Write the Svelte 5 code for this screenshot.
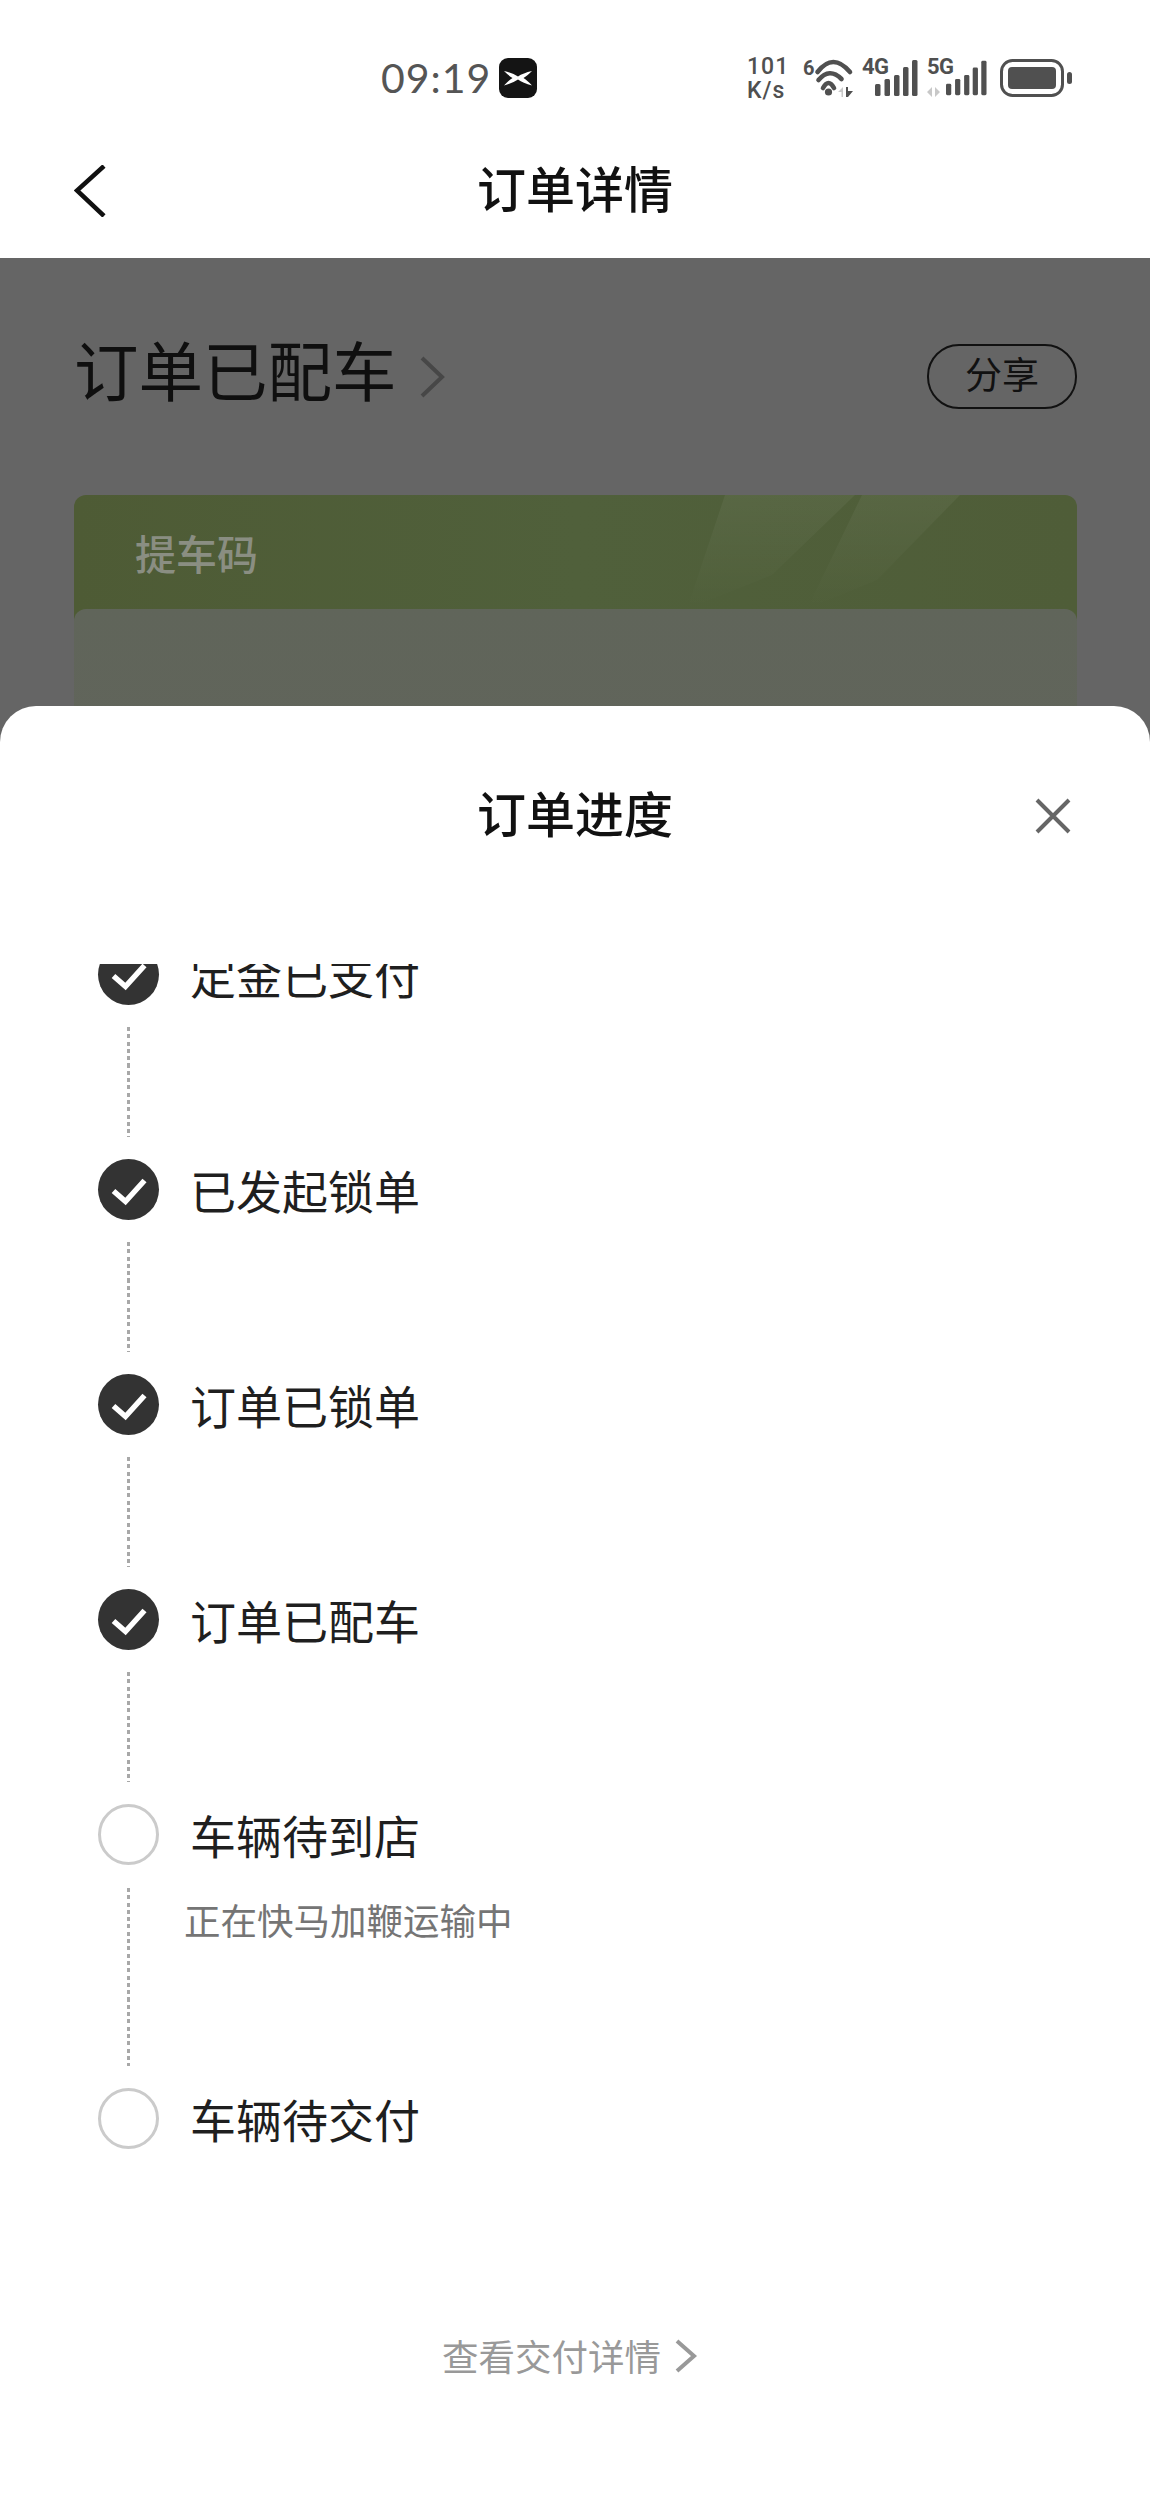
<script lang="ts">
  const steps = [
    { label: '定金已支付', done: true },
    { label: '已发起锁单', done: true },
    { label: '订单已锁单', done: true },
    { label: '订单已配车', done: true },
    { label: '车辆待到店', done: false, note: '正在快马加鞭运输中' },
    { label: '车辆待交付', done: false },
  ]

  const bars = [
    [0, 12],
    [9.5, 17],
    [19, 21],
    [28, 29],
    [37, 36],
  ]
</script>

<div class="phone">
  <div class="status">
    <span class="time">09:19</span>
    <span class="app-badge">
      <svg width="38" height="40" viewBox="0 0 38 40">
        <rect width="38" height="40" rx="9" fill="#141414" />
        <path d="M5 13 Q14 15 19 18.500 Q24 15 33 13 Q28 18 24.500 20 Q28 22 33 27.500 Q24 25 19 21.500 Q14 25 5 27.500 Q10 22 13.500 20 Q10 18 5 13Z" fill="#fff" />
      </svg>
    </span>
    <div class="indicators">
      <div class="speed"><span>101</span><span>K/s</span></div>
      <div class="wifi">
        <span class="wifi-num">6</span>
        <svg width="38" height="38" viewBox="0 0 38 38">
          <g fill="none" stroke="#505050" stroke-width="4.600" stroke-linecap="round">
            <path d="M2.500 13 Q18 -7 35 13" />
            <path d="M3.500 21 Q14.500 8 26.500 20" />
            <path d="M8 29 Q13.500 19 19 29" />
          </g>
          <circle cx="13.500" cy="33" r="3.600" fill="#505050" />
          <path d="M23 33 L28 28 V38 H26.500 V33Z" fill="#c8c8c8" />
          <path d="M31 28 H33 V32 H38 L33 38 H31Z" fill="#505050" />
        </svg>
      </div>
      <div class="signal">
        <span class="net">4G</span>
        <svg width="43" height="37" viewBox="0 0 43 37">
          {#each bars as [x, h]}
            <rect x={x} y={37 - h} width="5.500" height={h} rx="1.500" fill="#505050" />
          {/each}
        </svg>
      </div>
      <div class="signal second">
        <span class="net">5G</span>
        <svg class="arrows" width="14" height="10" viewBox="0 0 14 10">
          <path d="M0 5 L5 0 V10 Z M8 0 L13 5 L8 10 Z" fill="#c8c8c8" />
        </svg>
        <svg width="41" height="37" viewBox="0 0 43 37">
          {#each bars as [x, h]}
            <rect x={x} y={37 - h} width="5.500" height={h} rx="1.500" fill="#505050" />
          {/each}
        </svg>
      </div>
      <svg width="72" height="38" viewBox="0 0 72 38">
        <rect x="1.500" y="1.500" width="61" height="35" rx="11" fill="none" stroke="#505050" stroke-width="3" />
        <rect x="8" y="8" width="48" height="22" rx="4" fill="#505050" />
        <rect x="67" y="13" width="5" height="12" rx="2.500" fill="#505050" />
      </svg>
    </div>
  </div>

  <header class="nav">
    <svg class="back" width="32" height="52" viewBox="0 0 32 52">
      <path d="M30 1 L3 25.500 L30 51" fill="none" stroke="#111" stroke-width="4.500" />
    </svg>
    <h1>订单详情</h1>
  </header>

  <main class="dimmed">
    <div class="headline">
      <div class="order-state">
        <span>订单已配车</span>
        <svg width="28" height="44" viewBox="0 0 28 44">
          <path d="M4 3 L24 22 L4 41" fill="none" stroke="#474747" stroke-width="4" />
        </svg>
      </div>
      <button class="share">分享</button>
    </div>
    <section class="code-card">
      <svg class="sheen" width="500" height="114" viewBox="0 0 500 114">
        <defs>
          <linearGradient id="fade" x1="0" y1="0" x2="0" y2="1">
            <stop offset="0" stop-color="#fff" stop-opacity="0.05" />
            <stop offset="1" stop-color="#fff" stop-opacity="0" />
          </linearGradient>
        </defs>
        <polygon points="148,0 278,0 195,80 110,114" fill="url(#fade)" />
        <polygon points="285,0 383,0 300,85 230,114" fill="url(#fade)" />
      </svg>
      <h2>提车码</h2>
      <div class="code-body"></div>
    </section>
  </main>

  <div class="sheet">
    <div class="sheet-head">
      <span></span>
      <h1>订单进度</h1>
      <svg class="close" width="38" height="38" viewBox="0 0 38 38">
        <path d="M3 3 L35 35 M35 3 L3 35" stroke="#666" stroke-width="4" fill="none" />
      </svg>
    </div>

    <div class="timeline">
      <ol>
        {#each steps as step, i}
          <li class="step">
            <span class="dot" class:done={step.done}>
              {#if step.done}
                <svg width="61" height="61" viewBox="0 0 61 61">
                  <path d="M15.500 32 L27.500 42.500 L46.500 21.500" fill="none" stroke="#fff" stroke-width="5.500" />
                </svg>
              {/if}
            </span>
            <span class="label">{step.label}</span>
          </li>
          {#if i < steps.length - 1}
            <li class="link" class:tall={step.note}>
              <span class="dash"></span>
              {#if step.note}<span class="note">{step.note}</span>{/if}
            </li>
          {/if}
        {/each}
      </ol>

      <div class="details">
        <span>查看交付详情</span>
        <svg width="24" height="34" viewBox="0 0 24 34">
          <path d="M3 2 L20 17 L3 32" fill="none" stroke="#999" stroke-width="4" />
        </svg>
      </div>
    </div>
  </div>
</div>

<style>
  :global(body) {
    margin: 0;
    background: #fff;
  }

  .phone {
    position: relative;
    width: 1150px;
    height: 2496px;
    overflow: hidden;
    display: flex;
    flex-direction: column;
    background: #fff;
    font-family: "Noto Sans CJK SC", "Noto Sans", sans-serif;
    color: #1c1c1c;
  }

  .status {
    height: 130px;
    box-sizing: border-box;
    padding: 58px 78px 0 381px;
    display: flex;
    align-items: flex-start;
    flex-shrink: 0;
  }

  .time {
    font-family: Lato, "Noto Sans", sans-serif;
    font-size: 41px;
    line-height: 40px;
    letter-spacing: 1px;
    color: #555;
    margin-right: 8px;
  }

  .app-badge {
    height: 40px;
  }

  .app-badge svg {
    display: block;
  }

  .indicators {
    margin-left: auto;
    display: flex;
    align-items: flex-start;
    color: #505050;
    font-family: Roboto, "Liberation Sans", sans-serif;
    font-weight: 700;
  }

  .speed {
    display: flex;
    flex-direction: column;
    width: 56px;
    margin-top: -3px;
    font-size: 23px;
    line-height: 24px;
    font-weight: 500;
    letter-spacing: 1px;
  }

  .wifi {
    display: flex;
    width: 59px;
    position: relative;
  }

  .wifi svg {
    margin-left: 1px;
    margin-top: 1px;
    overflow: visible;
  }

  .wifi-num {
    font-size: 20px;
    line-height: 20px;
    width: 11px;
  }

  .signal {
    display: flex;
    width: 65px;
    position: relative;
    margin-top: 1px;
  }

  .signal svg:last-child {
    position: absolute;
    left: 13px;
    top: 0;
  }

  .net {
    font-size: 22px;
    line-height: 20px;
    letter-spacing: -0.5px;
    margin-top: -2px;
  }

  .second {
    width: 73px;
  }

  .second .arrows {
    position: absolute;
    left: 0;
    top: 28px;
  }

  .second svg:last-child {
    left: 19px;
  }

  .indicators > svg {
    margin-top: 1px;
  }

  .nav {
    height: 128px;
    padding-bottom: 14px;
    box-sizing: border-box;
    display: flex;
    align-items: center;
    justify-content: center;
    position: relative;
    flex-shrink: 0;
  }

  .nav h1,
  .sheet-head h1 {
    margin: 0;
    font-size: 49px;
    line-height: 60px;
    font-weight: 500;
    color: #111;
  }

  .back {
    position: absolute;
    left: 74px;
    top: 35px;
  }

  .dimmed {
    flex: 1;
    background: #656565;
    padding: 87px 73px 0 74px;
  }

  .headline {
    display: flex;
    align-items: center;
    justify-content: space-between;
    height: 63px;
  }

  .order-state {
    display: flex;
    align-items: center;
    gap: 21px;
    font-size: 64.500px;
    line-height: 70px;
    color: #0f0f0f;
    margin-top: -18px;
  }

  .order-state svg {
    margin-top: 18px;
  }

  .share {
    width: 150px;
    height: 65px;
    border: 2px solid #111;
    border-radius: 32px;
    background: none;
    font: inherit;
    font-size: 37px;
    line-height: 50px;
    padding: 0 0 8px;
    color: #111;
  }

  .code-card {
    position: relative;
    margin-top: 87px;
    height: 400px;
    border-radius: 12px;
    background: linear-gradient(to right, #4e5b35, #50603b 50%, #4f5d38);
    overflow: hidden;
  }

  .sheen {
    position: absolute;
    top: 0;
    right: 0;
  }

  .code-card h2 {
    position: relative;
    margin: 0;
    padding: 32px 0 0 61px;
    height: 82px;
    font-size: 41px;
    line-height: 50px;
    font-weight: 500;
    color: #8a8e82;
  }

  .code-body {
    height: 300px;
    border-radius: 12px;
    background: linear-gradient(to bottom, #60655a, #62645c);
    position: relative;
  }

  .sheet {
    position: absolute;
    left: 0;
    right: 0;
    top: 706px;
    bottom: 0;
    background: #fff;
    border-radius: 36px 36px 0 0;
    padding-top: 76px;
    display: flex;
    flex-direction: column;
  }

  .sheet-head {
    display: grid;
    grid-template-columns: 1fr auto 1fr;
    align-items: center;
    padding-right: 78px;
    padding-left: 78px;
  }

  .close {
    justify-self: end;
    margin-top: 8px;
  }

  .timeline {
    margin-top: 122px;
    flex: 1;
    overflow: hidden;
  }

  ol {
    list-style: none;
    margin: -20px 0 0;
    padding: 0 0 0 98px;
  }

  .step {
    display: flex;
    align-items: center;
    height: 61px;
    gap: 31px;
  }

  .dot {
    box-sizing: border-box;
    width: 61px;
    height: 61px;
    border-radius: 50%;
    border: 3px solid #cbcbcb;
    flex-shrink: 0;
    position: relative;
  }

  .dot.done {
    border: none;
    background: #333;
  }

  .dot svg {
    display: block;
  }

  .label {
    font-size: 46px;
    line-height: 61px;
    color: #1f1f1f;
  }

  .link {
    display: flex;
    height: 110px;
    padding: 22px 0;
    margin-left: 29px;
  }

  .link.tall {
    height: 178px;
    padding: 23px 0 22px;
  }

  .dash {
    width: 3px;
    flex-shrink: 0;
    background: repeating-linear-gradient(to bottom, #a8a8a8 0 4px, transparent 4px 7.3px);
  }

  .note {
    font-size: 36.500px;
    line-height: 50px;
    color: #757575;
    margin: 7px 0 0 54px;
  }

  .details {
    margin-top: 182px;
    display: flex;
    align-items: center;
    justify-content: center;
    gap: 13px;
    padding-right: 10px;
    font-size: 36.500px;
    line-height: 50px;
    color: #999;
  }
</style>
